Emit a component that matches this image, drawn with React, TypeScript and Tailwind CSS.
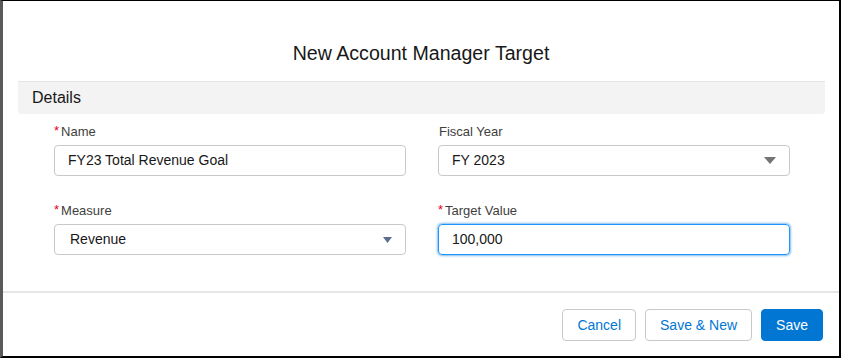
// Modal-style record form: "New Account Manager Target".
import type { ReactNode } from 'react';

const font = { fontFamily: '"Liberation Sans", Arial, sans-serif' };

export default function App() {
  return (
    <div
      className="w-[841px] h-[358px] bg-white flex flex-col border-t border-r-2 border-b-2 border-black border-l-[3px] border-l-[#5a5a5a] text-[#181818]"
      style={font}
    >
      <header className="pt-[40px] pb-[15px] text-center">
        <h1 className="text-[19.6px] leading-[25px]">New Account Manager Target</h1>
      </header>

      <section className="ml-[15px] mr-[14px] h-[33px] border-t border-[#e3e3e3] bg-[#f3f3f3] rounded-b-[4px] flex items-center pl-[14px]">
        <h2 className="text-[16px] leading-[20px]">Details</h2>
      </section>

      <div className="pl-[51px] pr-[50px] pt-[9px] grid grid-cols-[352px_352px] gap-x-[32px] gap-y-[26px]">
        <Field label="Name" required>
          <Box>FY23 Total Revenue Goal</Box>
        </Field>
        <Field label="Fiscal Year">
          <Box arrow={<BigArrow />}>FY 2023</Box>
        </Field>
        <Field label="Measure" required>
          <Box arrow={<SmallArrow />} indent>
            Revenue
          </Box>
        </Field>
        <Field label="Target Value" required>
          <Box focused>100,000</Box>
        </Field>
      </div>

      <footer className="mt-auto border-t-2 border-[#e5e5e5] h-[65px] flex items-start justify-end gap-[9px] pt-[16px] pr-[16px]">
        <Button>Cancel</Button>
        <Button>Save &amp; New</Button>
        <Button brand>Save</Button>
      </footer>
    </div>
  );
}

function Field({ label, required, children }: { label: string; required?: boolean; children: ReactNode }) {
  return (
    <div>
      <div className="h-[18px] mb-[4px] flex items-center text-[13px] text-[#3e3e3c]">
        {required && <span className="text-[#ea001e] mr-[2px] -mt-[3px] text-[13px] leading-none">*</span>}
        <span className={required ? '' : 'pl-[1px]'}>{label}</span>
      </div>
      {children}
    </div>
  );
}

function Box({
  children,
  arrow,
  focused,
  indent,
}: {
  children: ReactNode;
  arrow?: ReactNode;
  focused?: boolean;
  indent?: boolean;
}) {
  return (
    <div
      className={
        'h-[31px] rounded-[4px] border flex items-center justify-between text-[14px] pr-[12px] ' +
        (indent ? 'pl-[15px] ' : 'pl-[13px] ') +
        (focused
          ? 'border-[#1b96ff] shadow-[0_0_3px_#0176d3]'
          : 'border-[#c9c9c9]')
      }
    >
      <span>{children}</span>
      {arrow}
    </div>
  );
}

function BigArrow() {
  return (
    <svg width="12" height="7" viewBox="0 0 12 7" className="mr-[1px]">
      <path d="M0 0h12L6 7z" fill="#747474" />
    </svg>
  );
}

function SmallArrow() {
  return (
    <svg width="9" height="6" viewBox="0 0 9 6" className="mr-[1px]">
      <path d="M0 0h9L4.5 6z" fill="#5a6f90" />
    </svg>
  );
}

function Button({ children, brand }: { children: ReactNode; brand?: boolean }) {
  return (
    <button
      className={
        'h-[32px] px-[14px] rounded-[4px] border text-[14px] leading-none ' +
        (brand
          ? 'bg-[#0176d3] border-[#0176d3] text-white'
          : 'bg-white border-[#c9c9c9] text-[#0176d3]')
      }
    >
      {children}
    </button>
  );
}
